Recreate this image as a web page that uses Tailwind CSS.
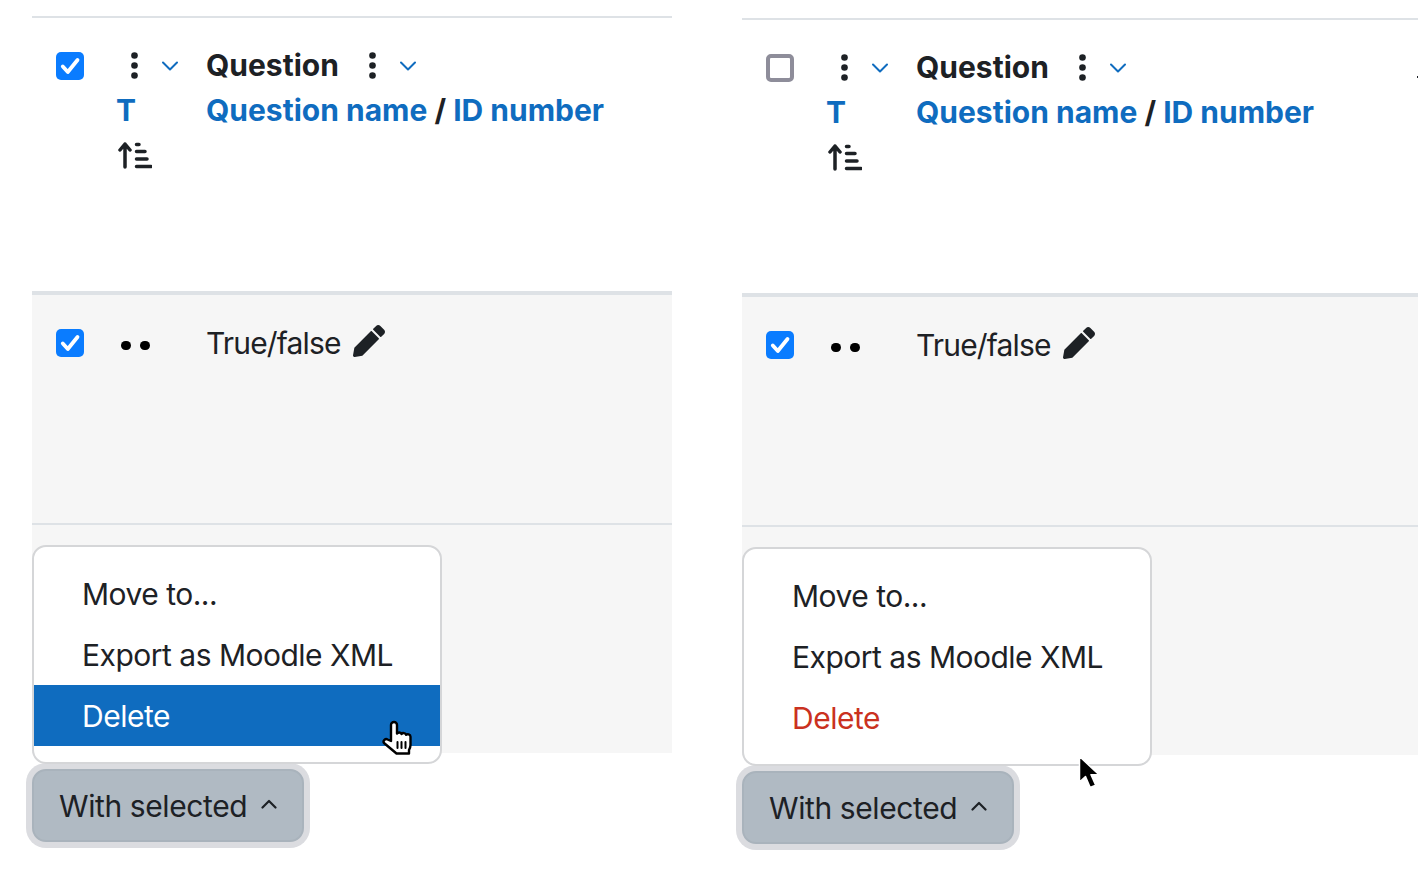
<!DOCTYPE html>
<html lang="en">
<head>
    <meta charset="UTF-8">
    <title>Question bank - With selected</title>
    <script src="https://cdn.jsdelivr.net/npm/@tailwindcss/browser@4"></script>
</head>
<body class="bg-white h-[892px] overflow-hidden font-['Inter','Noto_Sans',sans-serif] text-[30px] leading-[45px] text-[#1d2125]">
    <div class="flex gap-[70px] pl-8 pt-4 w-[1418px] h-[892px] overflow-hidden">

        <!-- Left panel: delete hovered -->
        <section class="relative w-[640px] shrink-0">
            <div class="grid grid-cols-[60px_90px_1fr] h-[275px] pl-6 pt-[25px] border-t-2 border-[#dee2e6]">
                <div class="pt-[9px]">
                    <div class="size-7 rounded-[5px] bg-[#0a7cff]">
                        <svg class="size-7" viewBox="0 0 28 28" fill="none" stroke="#fff" stroke-width="3.800" stroke-linecap="round" stroke-linejoin="round"><path d="M6.800 14.500l5 5.500L21.500 8"/></svg>
                    </div>
                </div>
                <div>
                    <div class="flex items-center h-[45px]">
                        <svg class="w-[7px] h-[27px] ml-[15px]" viewBox="0 0 7 27" fill="#1d2125"><circle cx="3.500" cy="3.500" r="3.300"/><circle cx="3.500" cy="13.500" r="3.300"/><circle cx="3.500" cy="23.500" r="3.300"/></svg>
                        <svg class="w-4 h-[10px] ml-6" viewBox="0 0 16 10" fill="none" stroke="#0f6cbf" stroke-width="2" stroke-linecap="round" stroke-linejoin="round"><path d="M1 1.500l7 7 7-7"/></svg>
                    </div>
                    <div class="font-bold text-[#0f6cbf]">T</div>
                    <svg class="w-[34px] h-[28px] mt-[8px] ml-[2px]" viewBox="0 0 34 28" fill="none" stroke="#1d2125" stroke-linecap="round" stroke-linejoin="round" stroke-width="3.500"><path d="M7 26V3M2 9l5-6 5 6"/><path d="M18.500 3.500H21M18.500 10.500H27M18.500 18H29M18.500 25.500H33"/></svg>
                </div>
                <div>
                    <div class="flex items-center h-[45px]">
                        <span class="font-bold">Question</span>
                        <svg class="w-[7px] h-[27px] ml-[30px]" viewBox="0 0 7 27" fill="#1d2125"><circle cx="3.500" cy="3.500" r="3.300"/><circle cx="3.500" cy="13.500" r="3.300"/><circle cx="3.500" cy="23.500" r="3.300"/></svg>
                        <svg class="w-4 h-[10px] ml-6" viewBox="0 0 16 10" fill="none" stroke="#0f6cbf" stroke-width="2" stroke-linecap="round" stroke-linejoin="round"><path d="M1 1.500l7 7 7-7"/></svg>
                    </div>
                    <div class="font-bold"><span class="text-[#0f6cbf]">Question name</span> / <span class="text-[#0f6cbf]">ID number</span></div>
                </div>
            </div>
            <div class="grid grid-cols-[60px_90px_1fr] h-[234px] pl-6 pt-[26px] bg-[#f6f6f6] border-t-4 border-b-2 border-t-[#dee2e6] border-b-[#dee2e6]">
                <div class="pt-2">
                    <div class="size-7 rounded-[5px] bg-[#0a7cff]">
                        <svg class="size-7" viewBox="0 0 28 28" fill="none" stroke="#fff" stroke-width="3.800" stroke-linecap="round" stroke-linejoin="round"><path d="M6.800 14.500l5 5.500L21.500 8"/></svg>
                    </div>
                </div>
                <div class="flex items-center h-[45px] gap-[9px] pl-[5px] pt-[3px]">
                    <span class="w-[10px] h-[9px] rounded-full bg-black"></span>
                    <span class="w-[10px] h-[9px] rounded-full bg-black"></span>
                </div>
                <div class="flex items-center h-[45px] gap-3">
                    <span class="tracking-[-0.85px]">True/false</span>
                    <svg class="size-8 -mt-[6px]" viewBox="0 0 512 512" fill="#1d2125"><path d="M497.900 142.100l-46.100 46.100c-4.700 4.700-12.300 4.700-17 0l-111-111c-4.700-4.700-4.700-12.300 0-17l46.100-46.100c18.700-18.700 49.100-18.700 67.900 0l60.100 60.100c18.800 18.700 18.800 49.100 0 67.900zM284.200 99.800L21.600 362.400.4 483.900c-2.900 16.400 11.400 30.600 27.800 27.800l121.500-21.300 262.600-262.600c4.700-4.700 4.700-12.300 0-17l-111-111c-4.800-4.700-12.400-4.700-17.100 0z"/></svg>
                </div>
            </div>
            <div class="h-[228px] bg-[#f6f6f6]"></div>
            <div class="relative mt-4 w-fit">
                <div class="absolute left-0 bottom-full mb-[5px] w-[410px] py-4 bg-white border-2 border-[#d5d6d8] rounded-[14px] tracking-[-0.5px]">
                    <div class="h-[61px] pl-12 pt-[2px] flex items-center">Move to...</div>
                    <div class="h-[61px] pl-12 pt-[2px] flex items-center">Export as Moodle XML</div>
                    <div class="h-[61px] pl-12 pt-px flex items-center bg-[#0f6cbf] text-white">Delete</div>
                </div>
                <button class="flex items-center h-[73px] w-[272px] pl-[25px] pt-[2px] gap-[14px] bg-[#b0bac3] border-2 border-[#a9b3bc] rounded-[14px] ring-[6px] ring-[#dbdce0]">
                    <span class="tracking-[-0.4px]">With selected</span>
                    <svg class="w-4 h-[10px] -mt-[6px]" viewBox="0 0 16 10" fill="none" stroke="#1d2125" stroke-width="2.200" stroke-linecap="round" stroke-linejoin="round"><path d="M1.500 8.500L8 2l6.500 6.500"/></svg>
                </button>
            </div>
            <!-- hand cursor -->
            <svg class="absolute left-[350px] top-[704px] w-8 h-9" viewBox="0 0 32 36" fill="#fff" stroke="#000" stroke-width="2.400" stroke-linejoin="round" stroke-linecap="round"><path d="M9 21V5a3 3 0 0 1 6 0v8.500c1-1.500 4-1.500 4.500.5 1-1.500 4-1.200 4.500.8 1.200-1 4.500-.6 4.500 2V25c0 2-.7 3.500-1.500 5v3.500H14.500L2 23c-1.500-2 1.500-5 3.500-3.500z"/><path d="M15.500 22v6M19.500 22v6M23.500 22v6" stroke-width="2"/></svg>
        </section>

        <!-- Right panel: no hover, header unchecked -->
        <section class="relative w-[676px] shrink-0 mt-[2px]">
            <div class="grid grid-cols-[60px_90px_1fr] h-[275px] pl-6 pt-[25px] border-t-2 border-[#dee2e6]">
                <div class="pt-[9px]">
                    <div class="size-7 rounded-[5px] bg-white border-4 border-[#8e8d9a]"></div>
                </div>
                <div>
                    <div class="flex items-center h-[45px]">
                        <svg class="w-[7px] h-[27px] ml-[15px]" viewBox="0 0 7 27" fill="#1d2125"><circle cx="3.500" cy="3.500" r="3.300"/><circle cx="3.500" cy="13.500" r="3.300"/><circle cx="3.500" cy="23.500" r="3.300"/></svg>
                        <svg class="w-4 h-[10px] ml-6" viewBox="0 0 16 10" fill="none" stroke="#0f6cbf" stroke-width="2" stroke-linecap="round" stroke-linejoin="round"><path d="M1 1.500l7 7 7-7"/></svg>
                    </div>
                    <div class="font-bold text-[#0f6cbf]">T</div>
                    <svg class="w-[34px] h-[28px] mt-[8px] ml-[2px]" viewBox="0 0 34 28" fill="none" stroke="#1d2125" stroke-linecap="round" stroke-linejoin="round" stroke-width="3.500"><path d="M7 26V3M2 9l5-6 5 6"/><path d="M18.500 3.500H21M18.500 10.500H27M18.500 18H29M18.500 25.500H33"/></svg>
                </div>
                <div>
                    <div class="flex items-center h-[45px]">
                        <span class="font-bold">Question</span>
                        <svg class="w-[7px] h-[27px] ml-[30px]" viewBox="0 0 7 27" fill="#1d2125"><circle cx="3.500" cy="3.500" r="3.300"/><circle cx="3.500" cy="13.500" r="3.300"/><circle cx="3.500" cy="23.500" r="3.300"/></svg>
                        <svg class="w-4 h-[10px] ml-6" viewBox="0 0 16 10" fill="none" stroke="#0f6cbf" stroke-width="2" stroke-linecap="round" stroke-linejoin="round"><path d="M1 1.500l7 7 7-7"/></svg>
                    </div>
                    <div class="font-bold"><span class="text-[#0f6cbf]">Question name</span> / <span class="text-[#0f6cbf]">ID number</span></div>
                </div>
            </div>
            <div class="grid grid-cols-[60px_90px_1fr] h-[234px] pl-6 pt-[26px] bg-[#f6f6f6] border-t-4 border-b-2 border-t-[#dee2e6] border-b-[#dee2e6]">
                <div class="pt-2">
                    <div class="size-7 rounded-[5px] bg-[#0a7cff]">
                        <svg class="size-7" viewBox="0 0 28 28" fill="none" stroke="#fff" stroke-width="3.800" stroke-linecap="round" stroke-linejoin="round"><path d="M6.800 14.500l5 5.500L21.500 8"/></svg>
                    </div>
                </div>
                <div class="flex items-center h-[45px] gap-[9px] pl-[5px] pt-[3px]">
                    <span class="w-[10px] h-[9px] rounded-full bg-black"></span>
                    <span class="w-[10px] h-[9px] rounded-full bg-black"></span>
                </div>
                <div class="flex items-center h-[45px] gap-3">
                    <span class="tracking-[-0.85px]">True/false</span>
                    <svg class="size-8 -mt-[6px]" viewBox="0 0 512 512" fill="#1d2125"><path d="M497.900 142.100l-46.100 46.100c-4.700 4.700-12.300 4.700-17 0l-111-111c-4.700-4.700-4.700-12.300 0-17l46.100-46.100c18.700-18.700 49.100-18.700 67.900 0l60.100 60.100c18.800 18.700 18.800 49.100 0 67.900zM284.200 99.800L21.600 362.400.4 483.900c-2.900 16.400 11.400 30.600 27.800 27.800l121.500-21.300 262.600-262.600c4.700-4.700 4.700-12.300 0-17l-111-111c-4.800-4.700-12.400-4.700-17.100 0z"/></svg>
                </div>
            </div>
            <div class="h-[228px] bg-[#f6f6f6]"></div>
            <div class="relative mt-4 w-fit">
                <div class="absolute left-0 bottom-full mb-[5px] w-[410px] py-4 bg-white border-2 border-[#d5d6d8] rounded-[14px] tracking-[-0.5px]">
                    <div class="h-[61px] pl-12 pt-[2px] flex items-center">Move to...</div>
                    <div class="h-[61px] pl-12 pt-[2px] flex items-center">Export as Moodle XML</div>
                    <div class="h-[61px] pl-12 pt-px flex items-center text-[#ca3120]">Delete</div>
                </div>
                <button class="flex items-center h-[73px] w-[272px] pl-[25px] pt-[2px] gap-[14px] bg-[#b0bac3] border-2 border-[#a9b3bc] rounded-[14px] ring-[6px] ring-[#dbdce0]">
                    <span class="tracking-[-0.4px]">With selected</span>
                    <svg class="w-4 h-[10px] -mt-[6px]" viewBox="0 0 16 10" fill="none" stroke="#1d2125" stroke-width="2.200" stroke-linecap="round" stroke-linejoin="round"><path d="M1.500 8.500L8 2l6.500 6.500"/></svg>
                </button>
            </div>
            <!-- arrow cursor and the next column's clipped menu dot -->
            <svg class="absolute left-[336px] top-[737px] w-[24px] h-[36px]" viewBox="0 0 24 36" fill="#000" stroke="#fff" stroke-width="1.500" stroke-linejoin="round"><path d="M1.500 1.500V27l6-5.500 4.700 11 5.500-2.300-4.700-10.500H21z"/></svg>
            <span class="absolute right-0 top-[58px] w-px h-[2px] bg-[#1d2125]"></span>
        </section>
    </div>
</body>
</html>
